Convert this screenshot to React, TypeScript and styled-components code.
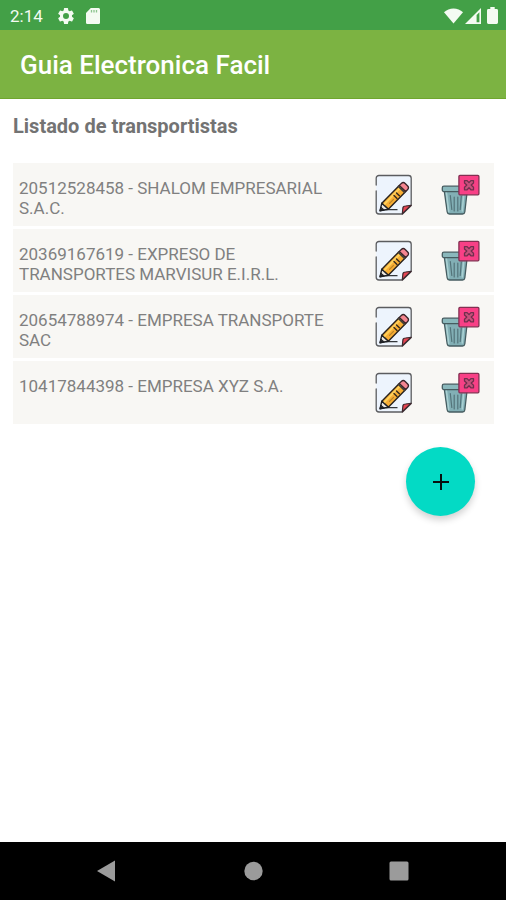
import React from "react";
import styled, { createGlobalStyle } from "styled-components";

const GlobalStyle = createGlobalStyle`
  *, *::before, *::after { box-sizing: border-box; }
  body {
    margin: 0;
    background: #ffffff;
    font-family: Roboto, "Liberation Sans", sans-serif;
  }
`;

const Screen = styled.div`
  display: flex;
  flex-direction: column;
  min-height: 100vh;
`;

const StatusBar = styled.div`
  display: flex;
  align-items: center;
  justify-content: space-between;
  height: 30px;
  padding: 1px 8px 0 10px;
  background: #43a047;
  color: #f4fbf2;
`;

const StatusGroup = styled.div<{ $gap: number }>`
  display: flex;
  align-items: center;
  gap: ${(p) => p.$gap}px;

  svg { display: block; }
`;

const Clock = styled.span`
  font-size: 17px;
  line-height: 20px;
`;

const AppBar = styled.header`
  display: flex;
  align-items: center;
  height: 69px;
  padding: 1px 20px 0;
  background: #7cb342;
  border-bottom: 1px solid #6fa62e;
`;

const AppTitle = styled.h1`
  margin: 0;
  font-size: 26px;
  font-weight: 500;
  line-height: 32px;
  color: #ffffff;
`;

const Content = styled.main`
  flex: 1;
  display: flex;
  flex-direction: column;
  padding: 15px 12px 0 13px;
`;

const Heading = styled.h2`
  margin: 0 0 25px;
  font-size: 20px;
  font-weight: 700;
  line-height: 24px;
  color: #737373;
`;

const CarrierList = styled.ul`
  display: flex;
  flex-direction: column;
  gap: 3px;
  margin: 0;
  padding: 0;
  list-style: none;
`;

const CarrierRow = styled.li`
  display: grid;
  grid-template-columns: 1fr 40px 40px;
  column-gap: 26px;
  min-height: 63px;
  padding: 11px 14px 7px 6px;
  background: #f8f7f4;
`;

const CarrierName = styled.span`
  padding-top: 4px;
  font-size: 17px;
  font-weight: 400;
  line-height: 20px;
  color: #808080;
`;

const IconButton = styled.button`
  display: block;
  width: 40px;
  height: 42px;
  padding: 0;
  border: 0;
  background: transparent;
  cursor: pointer;

  svg { display: block; }
`;

const AddButton = styled.button`
  display: flex;
  align-items: center;
  justify-content: center;
  align-self: flex-end;
  width: 69px;
  height: 69px;
  margin: 23px 19px 24px 0;
  padding: 0;
  border: 0;
  border-radius: 50%;
  background: #03dac5;
  box-shadow: 0 4px 7px rgba(0, 0, 0, 0.18);
  cursor: pointer;
`;

const NavBar = styled.nav`
  display: grid;
  grid-template-columns: repeat(3, 1fr);
  height: 58px;
  padding: 0 34px;
  background: #000000;
`;

const NavButton = styled.button`
  display: flex;
  align-items: center;
  justify-content: center;
  padding: 0;
  border: 0;
  background: transparent;
  color: #9b9b9b;
  cursor: pointer;
`;

const GearIcon = () => (
  <svg width="20" height="20" viewBox="0 0 24 24" fill="currentColor" aria-hidden="true">
    <path d="M19.14 12.94c.04-.3.06-.61.06-.94s-.02-.64-.07-.94l2.03-1.58a.49.49 0 0 0 .12-.61l-1.92-3.32a.49.49 0 0 0-.59-.22l-2.39.96a7 7 0 0 0-1.62-.94l-.36-2.54a.48.48 0 0 0-.48-.41h-3.84a.47.47 0 0 0-.47.41l-.36 2.54c-.59.24-1.13.57-1.62.94l-2.39-.96a.48.48 0 0 0-.59.22L2.74 8.87a.47.47 0 0 0 .12.61l2.03 1.58c-.05.3-.09.63-.09.94s.02.64.07.94l-2.03 1.58a.49.49 0 0 0-.12.61l1.92 3.32c.12.22.37.29.59.22l2.39-.96c.5.38 1.03.7 1.62.94l.36 2.54c.05.24.24.41.48.41h3.84c.24 0 .44-.17.47-.41l.36-2.54a6.8 6.8 0 0 0 1.62-.94l2.39.96c.22.08.47 0 .59-.22l1.92-3.32a.47.47 0 0 0-.12-.61zM12 15.6a3.6 3.6 0 1 1 0-7.2 3.6 3.6 0 0 1 0 7.2z" />
  </svg>
);

const SdCardIcon = () => (
  <svg width="14" height="16" viewBox="0 0 14 16" aria-hidden="true">
    <path d="M4.8 0H12.3A1.6 1.6 0 0 1 14 1.6V14.3A1.6 1.6 0 0 1 12.3 16H1.7A1.6 1.6 0 0 1 0 14.3V5Z" fill="currentColor" />
    <path d="M5.5 2v2.6M8 2v2.6M10.5 2v2.6" stroke="#8cc48d" strokeWidth="1.3" />
  </svg>
);

const WifiIcon = () => (
  <svg width="19" height="16" viewBox="0 0 19 16" fill="currentColor" aria-hidden="true">
    <path d="M9.5 15.5 0 4.3C5-.8 14-.8 19 4.3Z" />
  </svg>
);

const SignalIcon = () => (
  <svg width="16" height="16" viewBox="0 0 16 16" aria-hidden="true">
    <path d="M0 16 16 0V16Z" fill="currentColor" />
    <path d="M11.6 7 14.4 4.2V14.2H11.6Z" fill="#43a047" />
  </svg>
);

const BatteryIcon = () => (
  <svg width="11" height="17" viewBox="0 0 11 17" fill="currentColor" aria-hidden="true">
    <path d="M3.3 0H7.7V2H9.6A1.4 1.4 0 0 1 11 3.4V15.6A1.4 1.4 0 0 1 9.6 17H1.4A1.4 1.4 0 0 1 0 15.6V3.4A1.4 1.4 0 0 1 1.4 2H3.3Z" />
  </svg>
);

const EditIcon = () => (
  <svg width="40" height="42" viewBox="0 0 40 42" strokeLinejoin="round" strokeLinecap="round" aria-hidden="true">
    <path d="M5 1.5H34.5A2.7 2.7 0 0 1 37.2 4.2V31.5L28 40H5A2.8 2.8 0 0 1 2.2 37.2V4.2A2.7 2.7 0 0 1 5 1.5Z" fill="#edf4fd" />
    <path d="M2.2 11V4.2A2.7 2.7 0 0 1 5 1.5H34.5A2.7 2.7 0 0 1 37.2 4.2V31.5L28.5 40H5A2.8 2.8 0 0 1 2.2 37.2V17" fill="none" stroke="#5b5c5f" strokeWidth="1.3" />
    <path d="M28.3 39.8 28.8 34.7A2.7 2.7 0 0 1 31.5 32L37.2 31.3Z" fill="#e64553" stroke="#3e292f" strokeWidth="1.2" />
    <path d="M12 35.7H23" stroke="#34373b" strokeWidth="1.3" />
    <path d="M7.8 29.2 25.3 11.4 31.7 17.4 14.3 35.2Z" fill="#f8ae35" stroke="#28221e" strokeWidth="1.4" />
    <path d="M10 30.6 26.8 13.1" stroke="#ffd15c" strokeWidth="2" />
    <path d="M7.8 29.2 6 36.8 14.3 35.2Z" fill="#ece8e2" stroke="#202226" strokeWidth="1.4" />
    <path d="M6.8 33.4 5.9 36.9 10 36.1Z" fill="#202226" stroke="#202226" />
    <path d="M25.3 11.4 27.3 9.5A2.8 2.8 0 0 1 31.2 9.5L33.7 12A2.7 2.7 0 0 1 33.7 15.6L31.7 17.4Z" fill="#f48591" stroke="#382329" strokeWidth="1.3" />
    <path d="M24.5 12.4 30.6 18.4" stroke="#403b38" strokeWidth="1.7" />
    <path d="M20 21.5 23 24.4M22.5 19 25.4 21.8" stroke="#34291e" strokeWidth="1.4" />
    <path d="M15.5 29.3 19.5 25.3" stroke="#b98428" strokeWidth="1.2" />
  </svg>
);

const DeleteIcon = () => (
  <svg width="40" height="42" viewBox="0 0 40 42" strokeLinejoin="round" strokeLinecap="round" aria-hidden="true">
    <path d="M4.3 17.2H27.2L24.8 38A2.3 2.3 0 0 1 22.5 40H9.5A2.3 2.3 0 0 1 7.2 38Z" fill="#82afb5" stroke="#465c60" strokeWidth="1.3" />
    <path d="M6.4 18.8 8.7 37.4M23.6 22 22.3 37" stroke="#aad0d2" strokeWidth="1.6" />
    <path d="M10.3 21.5 11.8 35.5M14.2 23V37M17.8 23V37M21.3 22 20.2 35.5" fill="none" stroke="#54747a" strokeWidth="1.2" />
    <path d="M3.9 12.2H20V17.6H3.9A1.6 1.6 0 0 1 2.3 16V13.8A1.6 1.6 0 0 1 3.9 12.2Z" fill="#8ab8bc" stroke="#465c60" strokeWidth="1.3" />
    <rect x="18.9" y="1.4" width="20" height="19.4" rx="1" fill="#f84086" stroke="#823051" strokeWidth="1.3" />
    <path d="M24.5 6.6H27.1L29 8.6 30.9 6.6H33.5V9L31.2 11.1 33.5 13.3V15.8H30.9L29 13.8 27.1 15.8H24.5V13.3L26.8 11.1 24.5 9Z" fill="#c7517c" stroke="#702f4d" strokeWidth="1.3" />
  </svg>
);

const PlusIcon = () => (
  <svg width="18" height="18" viewBox="0 0 18 18" aria-hidden="true">
    <path d="M9 1V17M1 9H17" stroke="#07110f" strokeWidth="2" />
  </svg>
);

const BackIcon = () => (
  <svg width="20" height="22" viewBox="0 0 20 22" fill="currentColor" aria-hidden="true">
    <path d="M0 11 18 0.5V21.5Z" />
  </svg>
);

const HomeIcon = () => (
  <svg width="20" height="20" viewBox="0 0 20 20" fill="currentColor" aria-hidden="true">
    <circle cx="10.5" cy="10" r="9.2" />
  </svg>
);

const RecentsIcon = () => (
  <svg width="20" height="20" viewBox="0 0 20 20" fill="currentColor" aria-hidden="true">
    <rect x="0.5" y="0.5" width="19" height="19" rx="1.5" />
  </svg>
);

const carriers = [
  { ruc: "20512528458", name: "SHALOM EMPRESARIAL S.A.C." },
  { ruc: "20369167619", name: "EXPRESO DE TRANSPORTES MARVISUR E.I.R.L." },
  { ruc: "20654788974", name: "EMPRESA TRANSPORTE SAC" },
  { ruc: "10417844398", name: "EMPRESA XYZ S.A." },
];

export default function App() {
  return (
    <Screen>
      <GlobalStyle />
      <StatusBar>
        <StatusGroup $gap={13}>
          <Clock>2:14</Clock>
          <StatusGroup $gap={10}>
            <GearIcon />
            <SdCardIcon />
          </StatusGroup>
        </StatusGroup>
        <StatusGroup $gap={6}>
          <StatusGroup $gap={2}>
            <WifiIcon />
            <SignalIcon />
          </StatusGroup>
          <BatteryIcon />
        </StatusGroup>
      </StatusBar>
      <AppBar>
        <AppTitle>Guia Electronica Facil</AppTitle>
      </AppBar>
      <Content>
        <Heading>Listado de transportistas</Heading>
        <CarrierList>
          {carriers.map((carrier) => (
            <CarrierRow key={carrier.ruc}>
              <CarrierName>{`${carrier.ruc} - ${carrier.name}`}</CarrierName>
              <IconButton type="button" aria-label={`Editar ${carrier.name}`}>
                <EditIcon />
              </IconButton>
              <IconButton type="button" aria-label={`Eliminar ${carrier.name}`}>
                <DeleteIcon />
              </IconButton>
            </CarrierRow>
          ))}
        </CarrierList>
        <AddButton type="button" aria-label="Agregar transportista">
          <PlusIcon />
        </AddButton>
      </Content>
      <NavBar aria-label="Sistema">
        <NavButton type="button" aria-label="Atrás">
          <BackIcon />
        </NavButton>
        <NavButton type="button" aria-label="Inicio">
          <HomeIcon />
        </NavButton>
        <NavButton type="button" aria-label="Recientes">
          <RecentsIcon />
        </NavButton>
      </NavBar>
    </Screen>
  );
}
